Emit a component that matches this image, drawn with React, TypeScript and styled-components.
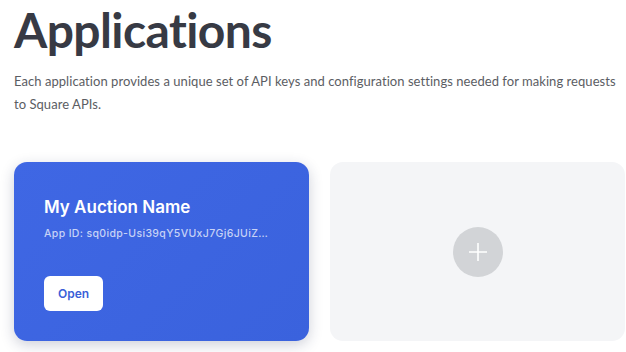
import React from 'react';
import styled, { createGlobalStyle } from 'styled-components';

const GlobalStyle = createGlobalStyle`
    html, body {
        margin: 0;
        padding: 0;
        background: #ffffff;
        overflow: hidden;
    }

    body {
        font-family: Lato, "Noto Sans", "Liberation Sans", sans-serif;
    }
`;

const Page = styled.main`
    width: 626px;
    height: 352px;
    padding: 0 0 0 14px;
    box-sizing: border-box;
    overflow: hidden;
`;

const Title = styled.h1`
    margin: 0;
    padding-top: 2px;
    font-size: 48px;
    line-height: 56px;
    font-weight: 700;
    letter-spacing: -0.6px;
    color: #373a44;
`;

const Intro = styled.p`
    margin: 12px 0 0;
    width: 612px;
    font-size: 13px;
    line-height: 23px;
    letter-spacing: 0.05px;
    color: #5b5d63;
`;

const CardGrid = styled.section`
    display: grid;
    grid-template-columns: 295px 295px;
    gap: 21px;
    margin-top: 46px;
`;

const AppCard = styled.article`
    height: 179px;
    box-sizing: border-box;
    padding: 34px 36px 30px 30px;
    border-radius: 13px;
    background: linear-gradient(135deg, #3f67e4 0%, #3a62dd 100%);
    box-shadow: 0 4px 14px rgba(30, 40, 80, 0.22);
    display: flex;
    flex-direction: column;
    color: #ffffff;
    font-family: Inter, "Noto Sans", sans-serif;
`;

const AppName = styled.h2`
    margin: 0;
    font-size: 17px;
    line-height: 22px;
    font-weight: 600;
`;

const AppId = styled.div`
    margin-top: 9px;
    font-size: 10.5px;
    line-height: 14px;
    font-weight: 500;
    letter-spacing: 0.35px;
    color: rgba(255, 255, 255, 0.72);
    white-space: nowrap;
    overflow: hidden;
    text-overflow: ellipsis;
`;

const OpenButton = styled.button`
    margin-top: auto;
    align-self: flex-start;
    width: 59px;
    height: 35px;
    border: none;
    border-radius: 6px;
    background: #ffffff;
    color: #3b5fd8;
    font-family: inherit;
    font-size: 12px;
    font-weight: 600;
    cursor: pointer;
`;

const NewCard = styled.button`
    height: 179px;
    border: none;
    border-radius: 13px;
    background: #f4f5f7;
    display: flex;
    align-items: center;
    justify-content: center;
    cursor: pointer;
`;

const PlusCircle = styled.span`
    width: 50px;
    height: 50px;
    border-radius: 50%;
    background: #d2d4d7;
    display: flex;
    align-items: center;
    justify-content: center;
`;

export default function App(): JSX.Element {
    return (<>
        <GlobalStyle />
        <Page>
            <Title>Applications</Title>
            <Intro>
                Each application provides a unique set of API keys and configuration settings needed for making requests to Square APIs.
            </Intro>
            <CardGrid>
                <AppCard>
                    <AppName>My Auction Name</AppName>
                    <AppId>App ID: sq0idp-Usi39qY5VUxJ7Gj6JUiZ4wHfQ2</AppId>
                    <OpenButton>Open</OpenButton>
                </AppCard>
                <NewCard aria-label='Create application'>
                    <PlusCircle>
                        <svg width='20' height='20' viewBox='0 0 20 20'>
                            <path d='M10 1v18M1 10h18' stroke='#ffffff' strokeWidth='1.6' />
                        </svg>
                    </PlusCircle>
                </NewCard>
            </CardGrid>
        </Page>
    </>)
}
